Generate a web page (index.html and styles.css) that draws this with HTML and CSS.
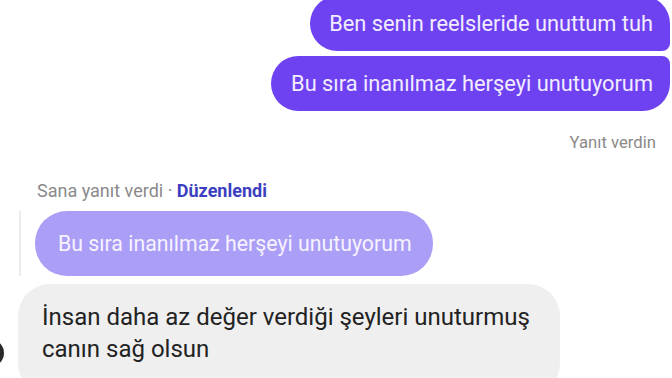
FILE: index.html
```html
<!DOCTYPE html>
<html lang="tr">
<head>
  <meta charset="UTF-8" />
  <title>Sohbet</title>
  <link rel="stylesheet" href="styles.css">
</head>
<body>
  <div class="chat">
    <div class="sent">
      <div class="bubble out first">Ben senin reelsleride unuttum tuh</div>
      <div class="bubble out last">Bu sıra inanılmaz herşeyi unutuyorum</div>
      <div class="note">Yanıt verdin</div>
    </div>

    <div class="received">
      <div class="reply-meta">Sana yanıt verdi · <span class="edited">Düzenlendi</span></div>
      <div class="quote">
        <div class="bubble quoted">Bu sıra inanılmaz herşeyi unutuyorum</div>
      </div>
      <div class="row">
        <div class="avatar"></div>
        <div class="bubble in">İnsan daha az değer verdiği şeyleri unuturmuş<br>canın sağ olsun</div>
      </div>
    </div>
  </div>
</body>
</html>
```

FILE: styles.css
```css
body {
  margin: 0;
  background: #fff;
  font-family: Roboto, 'Noto Sans', sans-serif;
  overflow: hidden;
}

.chat {
  width: 672px;
  height: 378px;
  overflow: hidden;
}

.sent {
  display: flex;
  flex-direction: column;
  align-items: flex-end;
  padding-right: 2px;
  margin-top: -4px;
}

.bubble {
  font-size: 21.8px;
  line-height: 26px;
}

.out {
  background: #6e42f1;
  color: #f1ecff;
  height: 55px;
  box-sizing: border-box;
  padding: 15px 17px 0 19px;
  border-radius: 28px;
  white-space: nowrap;
}

.out.first {
  border-bottom-right-radius: 8px;
}

.out.last {
  margin-top: 5px;
  border-top-right-radius: 8px;
  padding-left: 20px;
}

.note {
  margin-top: 22px;
  margin-right: 14px;
  font-size: 16.7px;
  line-height: 20px;
  color: #8a8a8a;
}

.received {
  margin-top: 27px;
}

.reply-meta {
  margin-left: 37px;
  font-size: 18px;
  line-height: 22px;
  color: #8a8a8a;
}

.edited {
  color: #3b3fbf;
  font-weight: 700;
}

.quote {
  margin: 9px 0 0 19px;
  border-left: 2px solid #ececec;
  padding-left: 14px;
}

.quoted {
  display: inline-block;
  background: #ab9ef6;
  color: #f6f3ff;
  font-size: 21.3px;
  height: 65px;
  box-sizing: border-box;
  padding: 20px 21px 0 23px;
  border-radius: 32px;
  white-space: nowrap;
}

.row {
  display: flex;
  align-items: flex-end;
  margin-top: 8px;
}

.avatar {
  width: 28px;
  height: 28px;
  border-radius: 50%;
  background: #2a2a2a;
  margin-left: -24px;
  margin-right: 14px;
  margin-bottom: 28px;
  flex-shrink: 0;
}

.in {
  background: #efefef;
  color: #222;
  font-size: 24px;
  width: 542px;
  box-sizing: border-box;
  padding: 17px 20px 30px 24px;
  line-height: 32px;
  border-radius: 32px;
  white-space: nowrap;
}
```
